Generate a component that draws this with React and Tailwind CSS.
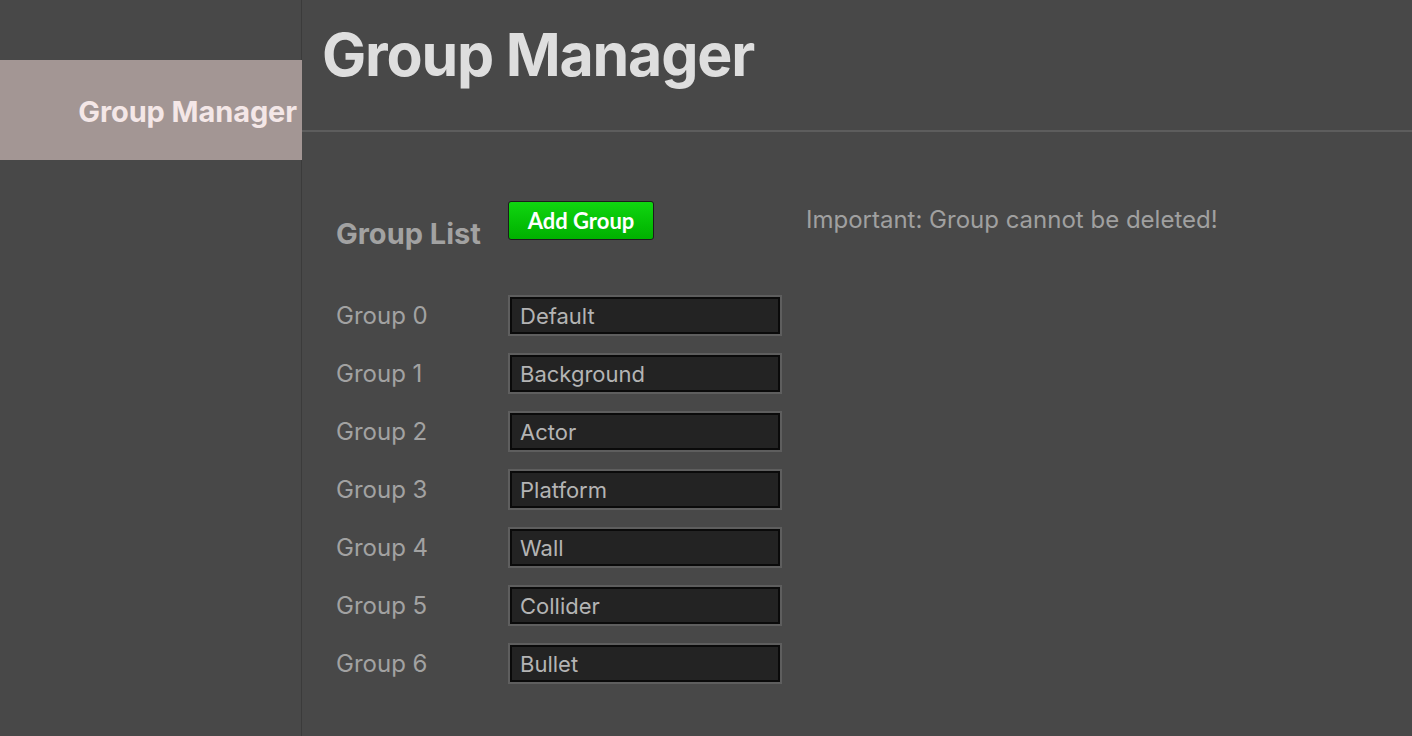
import React, { useState } from 'react';

const initialGroups = ['Default', 'Background', 'Actor', 'Platform', 'Wall', 'Collider', 'Bullet'];

export default function App() {
  const [groups, setGroups] = useState(initialGroups);

  const updateGroup = (index, value) => {
    setGroups((prev) => prev.map((g, i) => (i === index ? value : g)));
  };

  return (
    <div className="flex h-[736px] w-full overflow-hidden bg-[#484848] font-['Inter','Liberation_Sans',sans-serif]">
      {/* Sidebar */}
      <aside className="w-[302px] shrink-0 border-r border-[#3b3b3b] pt-[60px]">
        <div className="relative z-10 -mr-px flex h-[100px] items-center justify-end bg-[#a39694] pr-[5px]">
          <span className="mt-[3px] text-[29px] font-bold tracking-[-0.1px] text-[#f4e7e7]">Group Manager</span>
        </div>
      </aside>

      {/* Main */}
      <main className="flex-1">
        <header className="flex h-[132px] items-start border-b-2 border-[#5d5d5d] pl-[20px] pt-[17px]">
          <h1 className="text-[59px] font-bold leading-[76px] tracking-[-1.2px] text-[#dedede]">Group Manager</h1>
        </header>

        <section className="pl-[34px] pt-[69px]">
          <div className="flex items-start">
            <h2 className="mt-[15px] w-[172px] text-[29px] font-bold leading-[36px] text-[#a2a2a2]">Group List</h2>
            <button
              onClick={() => setGroups([...groups, 'Group ' + groups.length])}
              className="h-[39px] w-[146px] rounded-[3px] border border-[#1c1c1c] bg-gradient-to-b from-[#10d610] to-[#00b000] font-['Lato','Liberation_Sans',sans-serif] text-[22px] font-bold leading-none text-white"
            >
              Add Group
            </button>
            <p className="ml-[152px] mt-[5px] text-[24px] leading-[28px] text-[#a0a0a0]">Important: Group cannot be deleted!</p>
          </div>

          <div className="mt-[43px] flex flex-col gap-[17px]">
            {groups.map((name, i) => (
              <div key={i} className="flex items-center">
                <label className="w-[172px] text-[24px] text-[#a2a2a2]">Group {i}</label>
                <div className="h-[41px] w-[274px] border-2 border-[#5e5e5e]">
                  <input
                    value={name}
                    onChange={(e) => updateGroup(i, e.target.value)}
                    className="h-full w-full border-2 border-[#0a0a0a] bg-[#232323] pl-[8px] text-[22px] text-[#b4b4b4] outline-none"
                  />
                </div>
              </div>
            ))}
          </div>
        </section>
      </main>
    </div>
  );
}
